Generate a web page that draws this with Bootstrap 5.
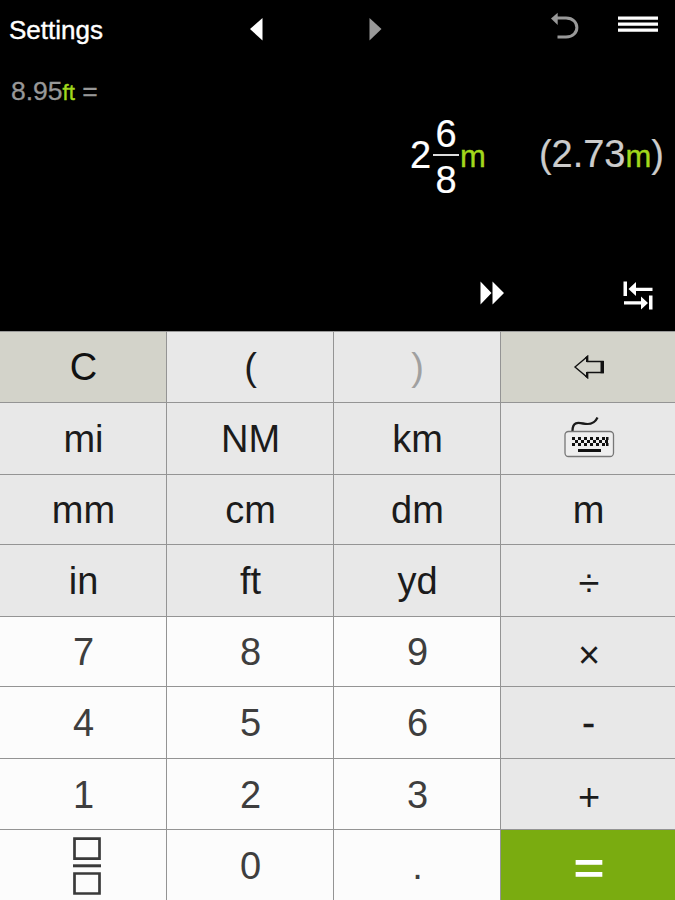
<!DOCTYPE html>
<html lang="en">
<head>
<meta charset="utf-8">
<meta name="viewport" content="width=device-width, initial-scale=1">
<title>Unit calculator</title>
<link href="https://cdn.jsdelivr.net/npm/bootstrap@5.3.0/dist/css/bootstrap.min.css" rel="stylesheet">
<style>
  body { font-family: "Liberation Sans", Arial, sans-serif; background: #000; }
  svg { display: block; }
  .calc { width: 675px; height: 900px; }
  .screen { height: 331px; background: #000; color: #fff; }
  .topbar { display: grid; grid-template-columns: 240px 120px 180px 70px 65px; height: 60px; }
  .topbar .title { font-size: 26px; line-height: 61px; padding-left: 9px; -webkit-text-stroke: .4px #fff; }
  .entry { height: 62px; padding-left: 11px; font-size: 26.5px; line-height: 63px; color: #989898; -webkit-text-stroke: .3px; }
  .entry .unit { font-size: 22px; }
  .unit { color: #a2d81c; -webkit-text-stroke: .4px #a2d81c; }
  .results { height: 74px; padding-right: 11px; font-size: 38px; line-height: 44px; margin-top: -4px; -webkit-text-stroke: .2px; }
  .results .unit { font-size: 31px; }
  .approx { color: #ccc; margin-left: 53px; }
  .fraction { width: 26px; margin: 0 1px 0 2px; line-height: 44px; }
  .fraction .numer { height: 36px; line-height: 33px; }
  .fraction .denom { height: 37px; line-height: 49px; }
  .fraction .bar { height: 2px; background: #ddd; }
  .tools { height: 70px; margin-top: 69px; display: grid; grid-template-columns: 143px 52px; justify-content: end; }
  .keys { display: grid; grid-template-columns: 167px 167px 167px 174px;
          grid-template-rows: 72px 72px 70px 72px 70px 72px 71px 70px; }
  .key { border: 0 solid #949494; border-width: 0 1px 1px 0; border-radius: 0; padding: 0 0 0 1px;
         font-size: 38px; line-height: 44px; color: #1b1b1b; background: #e8e8e8; font-family: inherit; }
  .key:nth-child(4n) { border-right: 0; }
  .key:nth-child(n+29) { border-bottom: 0; }
  .key:nth-child(-n+4) { border-top: 1px solid #999; }
  .key.digit { background: #fcfcfc; color: #3e3e3e; padding-top: 1px; }
  .key.edit { background: #d3d3ca; color: #111; }
  .key.dim { color: #a0a0a0; }
  .key.op { padding-top: 5px; padding-left: 2px; }
  .key.times { padding-top: 7px; }
  .key.minus { padding-top: 1px; -webkit-text-stroke: .6px; }
  .key.equals { background: #7aac10; color: #fff; font-weight: 700; font-size: 53px; padding: 8px 0 0 2px; }
  .key.equals span { display: inline-block; transform: scaleY(.84); }
</style>
</head>
<body>
<main class="calc d-flex flex-column overflow-hidden">
  <section class="screen flex-shrink-0">
    <header class="topbar">
      <div class="title">Settings</div>
      <svg width="40" height="60" fill="#fff"><path d="M10 29 22.5 18V40.5Z"/></svg>
      <svg width="40" height="60" fill="#999"><path d="M21.5 29 9.5 18V40.5Z"/></svg>
      <svg width="60" height="60"><path d="M17 18H26C40.500 18 40.500 37 26 37H17.500" fill="none" stroke="#999" stroke-width="3"/><path d="M11 18.500 17.700 12.800V25Z" fill="#999"/></svg>
      <svg width="60" height="60" fill="#fff"><path d="M8 16.500H48V19.700H8ZM8 22.500H48V25.700H8ZM8 28.500H48V31.700H8Z"/></svg>
    </header>
    <div class="entry">8.95<span class="unit">ft</span> =</div>
    <div class="results d-flex justify-content-end align-items-center">
      <div class="d-flex align-items-center">
        <span>2</span>
        <div class="fraction text-center">
          <div class="numer">6</div><div class="bar"></div><div class="denom">8</div>
        </div>
        <span><span class="unit">m</span></span>
      </div>
      <div class="approx">(2.73<span class="unit">m</span>)</div>
    </div>
    <div class="tools">
      <svg width="40" height="70" fill="#fff"><path d="M.5 20.500 11.500 32 .5 43.500ZM12.500 20.500 24 32 12.500 43.500Z"/></svg>
      <svg width="40" height="70" fill="#fff"><path d="M.5 20.500H4V35H.5ZM5.500 28 13 21V26.700H29.500V30H13V35ZM26 34.500H29.500V48.500H26ZM25 42 18 48.500V43.500H1V40.200H18V35.500Z"/></svg>
    </div>
  </section>
  <section class="keys">
    <button class="btn key edit">C</button>
    <button class="btn key">(</button>
    <button class="btn key dim">)</button>
    <button class="btn key edit d-flex justify-content-center align-items-center" aria-label="Backspace">
      <svg width="32" height="26"><path d="M2 13 14.500 2.500V7.500H30V18.500H14.500V23.500Z" fill="none" stroke="#111" stroke-width="1.400"/><path d="M27.500 7H31V19.200H27.500ZM12 3.500 15.200 1V8H13V5ZM12 22.500 15.200 25V18H13V21Z" fill="#111"/></svg>
    </button>
    <button class="btn key">mi</button>
    <button class="btn key">NM</button>
    <button class="btn key">km</button>
    <button class="btn key d-flex justify-content-center align-items-center pb-1" aria-label="Keyboard">
      <svg width="52" height="42"><path d="M9.500 15C9.500 5.500 15 6.500 20 7.500S31 9 34.500 1.500" fill="none" stroke="#1b1b1b" stroke-width="2.300"/><rect x="2" y="15.500" width="48.500" height="25" rx="3.500" fill="#eee" stroke="#777" stroke-width="1.300"/><path d="M9 22.500H45M9 28.500H45" stroke="#111" stroke-width="3" stroke-dasharray="3"/><path d="M12 25.500H45" stroke="#111" stroke-width="3" stroke-dasharray="3"/><path d="M43 21H45.500V24H43ZM43 27H45.500V30H43ZM15 33H38V36H15Z" fill="#111"/></svg>
    </button>
    <button class="btn key">mm</button>
    <button class="btn key">cm</button>
    <button class="btn key">dm</button>
    <button class="btn key">m</button>
    <button class="btn key">in</button>
    <button class="btn key">ft</button>
    <button class="btn key">yd</button>
    <button class="btn key op">÷</button>
    <button class="btn key digit">7</button>
    <button class="btn key digit">8</button>
    <button class="btn key digit">9</button>
    <button class="btn key op times">×</button>
    <button class="btn key digit">4</button>
    <button class="btn key digit">5</button>
    <button class="btn key digit">6</button>
    <button class="btn key minus">-</button>
    <button class="btn key digit">1</button>
    <button class="btn key digit">2</button>
    <button class="btn key digit">3</button>
    <button class="btn key op">+</button>
    <button class="btn key digit d-flex justify-content-center align-items-center ps-2" aria-label="Fraction">
      <svg width="28" height="58"><path d="M1.500 1.700H26.500V21.700H1.500ZM1.500 36.500H26.500V56.500H1.500Z" fill="none" stroke="#3a3a3a" stroke-width="2.700"/><path d="M0 27.300H28V30.300H0Z" fill="#3a3a3a"/></svg>
    </button>
    <button class="btn key digit">0</button>
    <button class="btn key digit">.</button>
    <button class="btn key equals"><span>=</span></button>
  </section>
</main>
<script src="https://cdn.jsdelivr.net/npm/bootstrap@5.3.0/dist/js/bootstrap.bundle.min.js"></script>
</body>
</html>
